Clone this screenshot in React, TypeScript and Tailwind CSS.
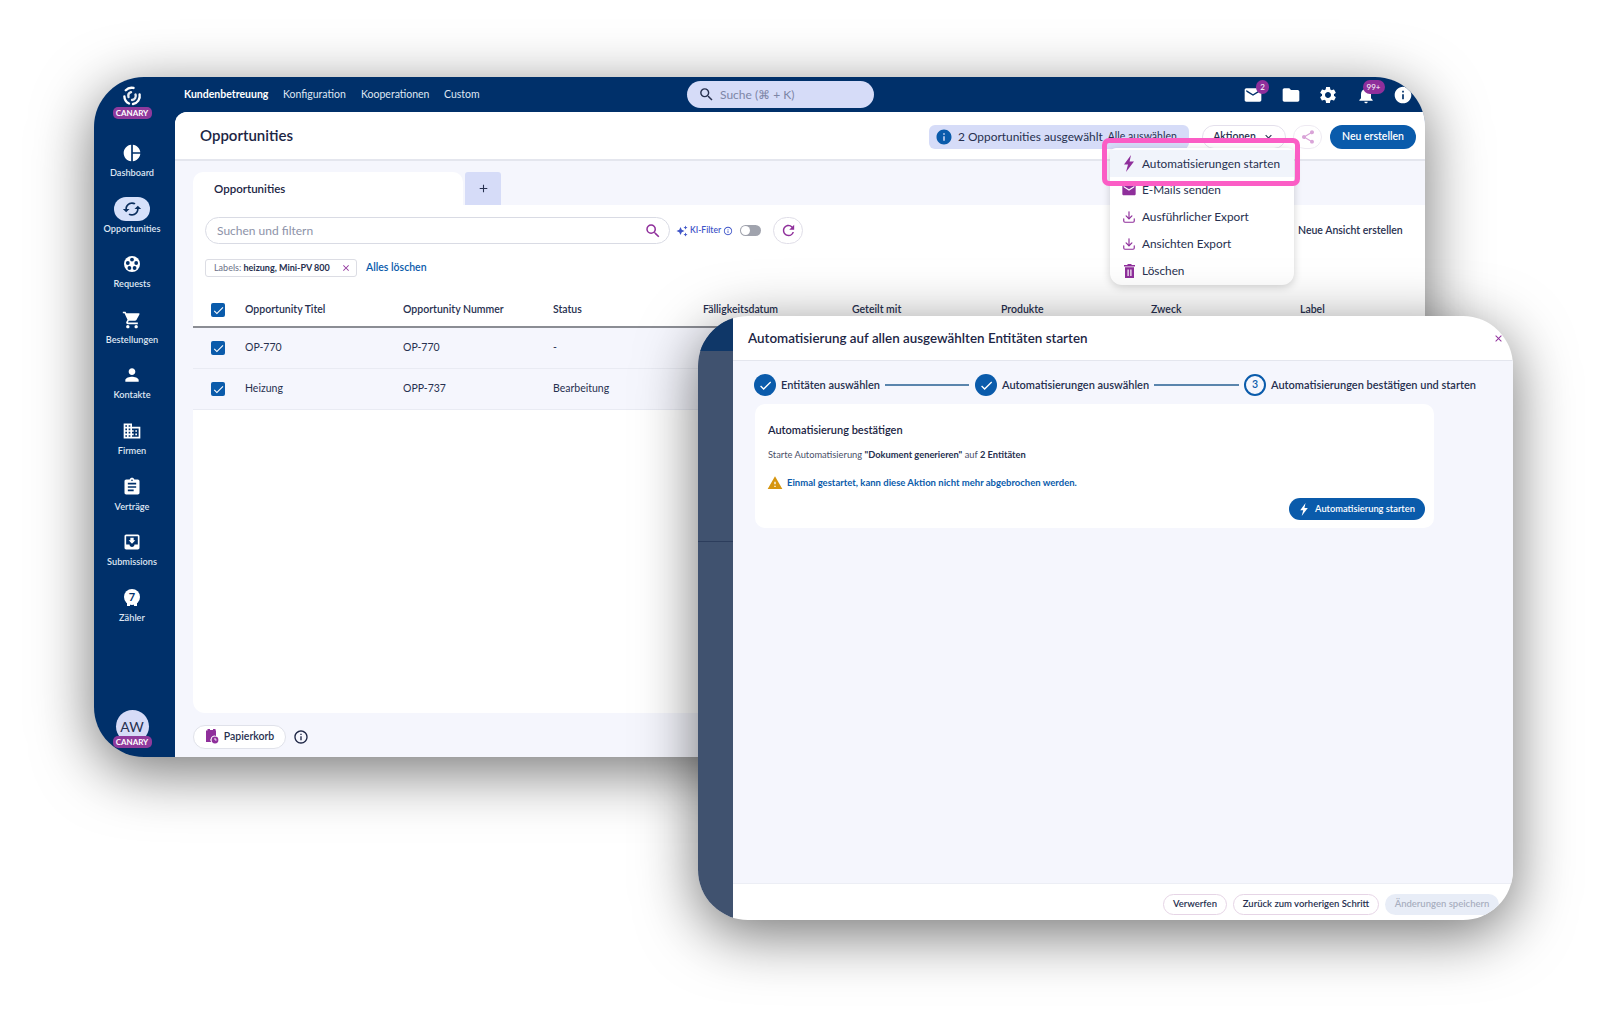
import * as React from 'react';
import {
  MdPieChart, MdCached, MdShoppingCart, MdPerson, MdOutlineDomain, MdAssignment, MdMoveToInbox,
  MdSearch, MdEmail, MdFolder, MdSettings, MdNotifications, MdInfo, MdShare, MdRefresh, MdAutoAwesome,
  MdWarning, MdCheck, MdClose, MdAdd, MdKeyboardArrowDown, MdInfoOutline,
} from 'react-icons/md';
import { Download } from 'lucide-react';

const font = { fontFamily: 'Lato, "Liberation Sans", sans-serif' };

function CanaryBadge(props: { className?: string }) {
  return (
    <div className={"rounded-[5px] bg-[#8f3a9c] text-white text-[8px] leading-[12px] font-bold text-center w-[39px] " + (props.className ?? '')}>
      CANARY
    </div>
  );
}

function Logo() {
  return (
    <svg width="20" height="20" viewBox="0 0 20 20" fill="none" stroke="white" strokeWidth="2.4" strokeLinecap="round">
      <path d="M5.5 2.8 A8 8 0 0 1 13.5 2.6" transform="rotate(-15 10 10)" />
      <path d="M17.6 8.5 A8 8 0 0 1 11 18" />
      <path d="M7 17.5 A8 8 0 0 1 2.4 10.5" />
      <path d="M13.5 8.5 A4 4 0 0 1 10 14" opacity="0.9" />
      <path d="M6.5 11 A4 4 0 0 1 9 6.2" opacity="0.9" />
    </svg>
  );
}

function Bolt(props: { className?: string }) {
  return (
    <svg className={props.className} width="12" height="17" viewBox="0 0 12 17" fill="currentColor">
      <path d="M8 0 L1 9.5 H5 L3 17 L11 6.5 H6.6 Z" />
    </svg>
  );
}

function TrashIcon() {
  return (
    <svg width="11" height="14" viewBox="0 0 11 14" fill="currentColor">
      <path d="M3.5 0 H7.5 V1 H11 V2.5 H0 V1 H3.5 Z" />
      <path fillRule="evenodd" d="M1 3.2 H10 V14 H1 Z M3.5 5.5 V12 H4.7 V5.5 Z M6.3 5.5 V12 H7.5 V5.5 Z" />
    </svg>
  );
}

function PapierkorbIcon() {
  return (
    <svg width="14" height="15" viewBox="0 0 14 15" fill="#8f2f9b">
      <path d="M2.5 0 H5 V1 H8 V0 H10.5 V1.5 H11 V7 A4 4 0 0 0 6.2 13 H1 V1.5 H2.5 Z" />
      <circle cx="10" cy="11" r="3.4" />
      <path d="M10 9 V11 H11.6" stroke="white" strokeWidth="0.9" fill="none" />
    </svg>
  );
}

function BallIcon() {
  return (
    <svg width="18" height="18" viewBox="0 0 18 18">
      <circle cx="9" cy="9" r="8" fill="white" />
      <circle cx="9" cy="4.6" r="1.9" fill="#00306a" />
      <circle cx="13.2" cy="8" r="1.9" fill="#00306a" />
      <circle cx="11.6" cy="13" r="1.9" fill="#00306a" />
      <circle cx="6.4" cy="13" r="1.9" fill="#00306a" />
      <circle cx="4.8" cy="8" r="1.9" fill="#00306a" />
    </svg>
  );
}

function MeterIcon() {
  return (
    <div className="relative w-[16px] h-[17px]">
      <div className="w-[16px] h-[16px] rounded-full bg-white text-[#00306a] text-[11px] font-bold leading-[16px] text-center">7</div>
      <div className="absolute left-[3px] top-[14px] w-[3px] h-[3px] bg-white" />
      <div className="absolute left-[10px] top-[14px] w-[3px] h-[3px] bg-white" />
    </div>
  );
}

function SideItem(props: { icon: React.ReactNode; label: string; active?: boolean }) {
  return (
    <div className="h-[55.6px] flex flex-col items-center">
      <div className={"w-[36px] h-[24px] rounded-full flex items-center justify-center text-[20px] " + (props.active ? 'bg-[#d6e0fa] text-[#0b2f5f]' : 'text-white')}>
        {props.icon}
      </div>
      <div className="text-[9.2px] leading-[12px] mt-[2px] font-semibold text-[#dfe6f3]">{props.label}</div>
    </div>
  );
}

function Checkbox() {
  return (
    <div className="w-[14px] h-[14px] rounded-[2px] bg-[#0a5bab] flex items-center justify-center text-white text-[13px]">
      <MdCheck />
    </div>
  );
}

const gridCols = "grid grid-cols-[34px_158px_150px_150px_149px_149px_150px_149px_1fr] items-center pl-[18px] text-[10.5px] text-[#27304f]";

function Row(props: { title: string; number: string; status: string }) {
  return (
    <div className={gridCols + " h-[41px] bg-[#f5f6fd] border-b border-[#e9ebf3]"}>
      <Checkbox />
      <div>{props.title}</div>
      <div>{props.number}</div>
      <div>{props.status}</div>
    </div>
  );
}

function MenuItem(props: { icon: React.ReactNode; label: string; active?: boolean }) {
  return (
    <div className={"h-[26.8px] flex items-center gap-[5px] pl-[11px] text-[11.8px] text-[#27304f] " + (props.active ? 'bg-[#f1f4fb]' : '')}>
      <span className="text-[16px] text-[#8f2f9b] w-[16px] flex justify-center">{props.icon}</span>
      {props.label}
    </div>
  );
}

function StepDone() {
  return (
    <div className="w-[22px] h-[22px] rounded-full bg-[#0a5bab] text-white flex items-center justify-center text-[15px] shrink-0">
      <MdCheck />
    </div>
  );
}

function MainWindow() {
  return (
    <div className="absolute left-[94px] top-[77px] w-[1331px] h-[680px] rounded-[50px] overflow-hidden bg-[#00306a] flex shadow-[0_14px_60px_rgba(0,0,0,0.55)]">
      {/* Sidebar */}
      <div className="w-[81px] shrink-0 flex flex-col items-center pt-[9px] pb-[14px] pr-[5px]">
        <Logo />
        <CanaryBadge className="mt-[1px]" />
        <div className="mt-[22px] w-full">
          <SideItem icon={<MdPieChart />} label="Dashboard" />
          <SideItem icon={<MdCached />} label="Opportunities" active />
          <SideItem icon={<BallIcon />} label="Requests" />
          <SideItem icon={<MdShoppingCart />} label="Bestellungen" />
          <SideItem icon={<MdPerson />} label="Kontakte" />
          <SideItem icon={<MdOutlineDomain />} label="Firmen" />
          <SideItem icon={<MdAssignment />} label="Verträge" />
          <SideItem icon={<MdMoveToInbox />} label="Submissions" />
          <SideItem icon={<MeterIcon />} label="Zähler" />
        </div>
        <div className="mt-auto relative w-[33px] h-[33px] rounded-full bg-[#d6dbf7] text-[#27304f] text-[14px] flex items-center justify-center">
          AW
          <CanaryBadge className="absolute left-[-3px] top-[26px]" />
        </div>
      </div>

      <div className="flex-1 flex flex-col min-w-0">
        {/* Topbar */}
        <div className="h-[35px] shrink-0 flex items-center relative text-[10.5px] text-[#dfe6f3]">
          <div className="flex items-center w-[512px] pl-[9px]">
            <span className="font-bold text-white w-[99px]">Kundenbetreuung</span>
            <span className="w-[78px]">Konfiguration</span>
            <span className="w-[83px]">Kooperationen</span>
            <span>Custom</span>
          </div>
          <div className="w-[187px] h-[27px] rounded-full bg-[#d6dcf8] flex items-center pl-[11px] gap-[5px] text-[#7d85a6] text-[12px]">
            <MdSearch className="text-[17px] text-[#27304f]" />
            Suche (⌘ + K)
          </div>
          <div className="ml-auto flex items-center gap-[17.5px] pr-[12px] text-[18px] text-white">
            <div className="relative">
              <MdEmail className="text-[20px]" />
              <span className="absolute left-[13px] top-[-5px] w-[13px] h-[14px] rounded-full bg-[#8f2f9b] text-[8px] leading-[14px] text-center">2</span>
            </div>
            <MdFolder className="text-[20px]" />
            <MdSettings className="text-[20px]" />
            <div className="relative">
              <MdNotifications className="text-[20px]" />
              <span className="absolute left-[7px] top-[-5px] w-[22px] h-[14px] rounded-full bg-[#8f2f9b] text-[8px] leading-[14px] text-center">99+</span>
            </div>
            <MdInfo className="text-[20px]" />
          </div>
        </div>

        {/* Content */}
        <div className="flex-1 bg-[#f5f6fd] rounded-tl-[12px] flex flex-col overflow-hidden relative">
          <div className="h-[49px] shrink-0 bg-white border-b-2 border-[#e4e6ee] flex items-center pl-[25px] pr-[9px] pt-[2px]">
            <div className="text-[15px] font-semibold text-[#1c2544] mt-[-2px]">Opportunities</div>
            <div className="ml-auto w-[260px] h-[24px] rounded-[6px] bg-[#d6dcf8] flex items-center pl-[6px] gap-[5px] text-[11.9px] text-[#27304f]">
              <MdInfo className="text-[18px] text-[#0a5bab]" />
              <span>2 Opportunities ausgewählt</span>
              <span className="text-[10.5px]">Alle auswählen</span>
            </div>
            <div className="ml-[13px] w-[84px] h-[24px] rounded-full border border-[#e4e0ec] flex items-center justify-center gap-[6px] text-[10.5px] font-semibold text-[#27304f]">
              Aktionen <MdKeyboardArrowDown className="text-[13px]" />
            </div>
            <div className="ml-[7px] w-[29px] h-[24px] rounded-full border border-[#eeeaf2] flex items-center justify-center text-[#d9a4d8] text-[16px]">
              <MdShare />
            </div>
            <div className="ml-[8px] w-[86px] h-[24px] rounded-full bg-[#0a5bab] text-white text-[10.5px] font-semibold flex items-center justify-center">
              Neu erstellen
            </div>
          </div>

          <div className="flex-1 flex flex-col pl-[18px] pt-[11px] min-h-0">
            {/* Tabs */}
            <div className="flex h-[33px] shrink-0">
              <div className="w-[270px] bg-white rounded-t-[10px] pl-[21px] flex items-center text-[11.5px] font-semibold text-[#1c2544]">Opportunities</div>
              <div className="ml-[2px] w-[36px] bg-[#d6dcf8] rounded-t-[3px] flex items-center justify-center text-[13px] text-[#27304f]"><MdAdd /></div>
            </div>

            {/* Card */}
            <div className="flex-1 bg-white rounded-bl-[12px] flex flex-col min-h-0">
              <div className="h-[27px] mt-[12px] flex items-center pl-[12px] shrink-0">
                <div className="w-[465px] h-[27px] rounded-full border border-[#d9dbe4] flex items-center pl-[11px] pr-[7px] text-[12px] text-[#8d92a8]">
                  Suchen und filtern
                  <MdSearch className="ml-auto text-[18px] text-[#8f2f9b]" />
                </div>
                <div className="ml-[6px] w-[58px] flex items-center gap-[2px] text-[8.5px] font-semibold text-[#3f55c8]">
                  <MdAutoAwesome className="text-[12px]" />
                  KI-Filter
                  <MdInfoOutline className="text-[10px]" />
                </div>
                <div className="ml-[6px] w-[21px] h-[11px] rounded-full bg-[#a0a3ad] p-[1px]">
                  <div className="w-[9px] h-[9px] rounded-full bg-white" />
                </div>
                <div className="ml-[12px] w-[30px] h-[27px] rounded-full border border-[#e0dee8] flex items-center justify-center text-[17px] text-[#8f2f9b]">
                  <MdRefresh />
                </div>
                <div className="ml-[495px] text-[10.5px] font-semibold text-[#27304f]">Neue Ansicht erstellen</div>
              </div>

              <div className="flex items-center pl-[12px] mt-[15px] h-[18px] shrink-0">
                <div className="w-[152px] h-[18px] rounded-[3px] border border-[#dcdde4] pl-[8px] flex items-center text-[9px] text-[#6b7087]">
                  Labels:&nbsp;<span className="font-bold text-[#27304f]">heizung, Mini-PV 800</span>
                  <MdClose className="ml-auto mr-[5px] text-[10px] text-[#8f2f9b]" />
                </div>
                <div className="ml-[9px] text-[10.5px] font-semibold text-[#0a5bab]">Alles löschen</div>
              </div>

              <div className={gridCols + " h-[38px] mt-[13px] pt-[4px] font-semibold border-b-2 border-[#8b8d94] shrink-0"}>
                <Checkbox />
                <div>Opportunity Titel</div>
                <div>Opportunity Nummer</div>
                <div>Status</div>
                <div>Fälligkeitsdatum</div>
                <div>Geteilt mit</div>
                <div>Produkte</div>
                <div>Zweck</div>
                <div>Label</div>
              </div>
              <Row title="OP-770" number="OP-770" status="-" />
              <Row title="Heizung" number="OPP-737" status="Bearbeitung" />
            </div>

            {/* Footer */}
            <div className="h-[44px] shrink-0 flex items-center pt-[3px]">
              <div className="w-[93px] h-[24px] rounded-full bg-white border border-[#e0e2ea] flex items-center justify-center gap-[5px] text-[10.5px] font-semibold text-[#27304f]">
                <PapierkorbIcon />
                Papierkorb
              </div>
              <MdInfoOutline className="ml-[7px] text-[16px] text-[#1c2544]" />
            </div>
          </div>

          {/* Dropdown */}
          <div className="absolute left-[935px] top-[36px] w-[184px] h-[137px] bg-white rounded-b-[12px] rounded-t-[6px] shadow-[0_2px_8px_rgba(0,0,0,0.18)] pt-[2px] flex flex-col">
            <MenuItem active icon={<Bolt />} label="Automatisierungen starten" />
            <MenuItem icon={<MdEmail />} label="E-Mails senden" />
            <MenuItem icon={<Download size={14} strokeWidth={2} />} label="Ausführlicher Export" />
            <MenuItem icon={<Download size={14} strokeWidth={2} />} label="Ansichten Export" />
            <MenuItem icon={<TrashIcon />} label="Löschen" />
          </div>
          <div className="absolute left-[927px] top-[26px] w-[198px] h-[48px] rounded-[7px] border-[5px] border-[#fb5dc5]" />
        </div>
      </div>
    </div>
  );
}

function Modal() {
  return (
    <div className="absolute left-[698px] top-[316px] w-[815px] h-[604px] rounded-[50px] overflow-hidden flex shadow-[0_14px_60px_rgba(0,0,0,0.55)] bg-white">
      <div className="w-[35px] shrink-0 flex flex-col bg-[#40526f]">
        <div className="h-[35px] bg-[#0f3768]" />
        <div className="h-[187px] mt-auto border-t border-[#2c3d5c] bg-[#40526f]" />
        <div className="h-[192px]" />
      </div>
      <div className="flex-1 flex flex-col min-w-0">
        <div className="h-[45px] shrink-0 border-b border-[#e4e6ee] flex items-center pl-[15px] pr-[9px] text-[13.4px] font-semibold text-[#1c2544]">
          Automatisierung auf allen ausgewählten Entitäten starten
          <MdClose className="ml-auto text-[11px] text-[#8f2f9b]" />
        </div>
        <div className="flex-1 bg-[#f5f6fd] pl-[21px] pt-[13px]">
          <div className="flex items-center h-[22px] text-[11px] font-semibold text-[#27304f] whitespace-nowrap">
            <StepDone />
            <span className="ml-[5px] w-[98px]">Entitäten auswählen</span>
            <div className="ml-[6px] w-[84px] h-[2px] bg-[#5a85ad]" />
            <div className="ml-[6px]"><StepDone /></div>
            <span className="ml-[5px] w-[147px]">Automatisierungen auswählen</span>
            <div className="ml-[5px] w-[85px] h-[2px] bg-[#5a85ad]" />
            <div className="ml-[5px] w-[22px] h-[22px] rounded-full border-2 border-[#0a5bab] text-[#0a5bab] flex items-center justify-center text-[10.5px] shrink-0">3</div>
            <span className="ml-[5px]">Automatisierungen bestätigen und starten</span>
          </div>
          <div className="mt-[8px] ml-[1px] w-[679px] h-[124px] bg-white rounded-[10px] pl-[13px] pr-[9px] pt-[19px] flex flex-col">
            <div className="text-[11px] font-semibold leading-[14px] text-[#1c2544]">Automatisierung bestätigen</div>
            <div className="mt-[12px] text-[9.3px] leading-[11px] text-[#4a5068]">
              Starte Automatisierung <span className="font-bold text-[#27304f]">"Dokument generieren"</span> auf <span className="font-bold text-[#27304f]">2 Entitäten</span>
            </div>
            <div className="mt-[15px] flex items-center gap-[4px] text-[9.5px] leading-[14px] font-bold text-[#0a5bab]">
              <MdWarning className="text-[16px] text-[#d6950f] ml-[-1px]" />
              Einmal gestartet, kann diese Aktion nicht mehr abgebrochen werden.
            </div>
            <div className="mt-[7px] self-end w-[136px] h-[22px] rounded-full bg-[#0a5bab] text-white text-[9.3px] font-semibold flex items-center justify-center gap-[6px]">
              <Bolt className="h-[13px] w-[10px]" />
              Automatisierung starten
            </div>
          </div>
        </div>
        <div className="h-[37px] shrink-0 border-t border-[#eceef5] flex items-center justify-end gap-[6px] pr-[14px] pt-[4px] text-[9.5px] font-semibold text-[#27304f]">
          <div className="w-[64px] h-[21px] rounded-full border border-[#e6d5e6] flex items-center justify-center">Verwerfen</div>
          <div className="w-[146px] h-[21px] rounded-full border border-[#e6d5e6] flex items-center justify-center">Zurück zum vorherigen Schritt</div>
          <div className="w-[114px] h-[21px] rounded-full bg-[#e8edf7] text-[#a9afc0] flex items-center justify-center">Änderungen speichern</div>
        </div>
      </div>
    </div>
  );
}

export default function App() {
  return (
    <div className="relative w-[1600px] h-[1013px] bg-white overflow-hidden" style={font}>
      <MainWindow />
      <Modal />
    </div>
  );
}
